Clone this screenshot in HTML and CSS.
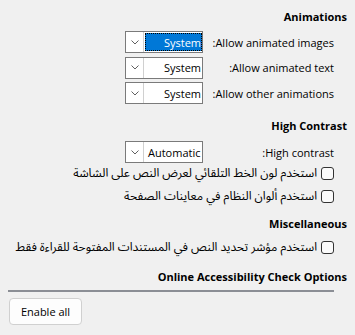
FILE: index.html
```html
<!DOCTYPE html>
<html lang="ar" dir="rtl">
<head>
<meta charset="utf-8">
<link rel="stylesheet" href="styles.css">
</head>
<body>
<div class="page">
  <section class="section sec-anim">
    <h2 class="title">Animations</h2>
    <div class="content">
      <div class="row">
        <span class="label">Allow animated images:</span>
        <div class="combo focused">
          <span class="value"><span class="sel">System</span></span>
          <span class="drop"><svg width="8" height="5" viewBox="0 0 8 5"><path d="M0.5 0.5 L4 4 L7.5 0.5" fill="none" stroke="#606060" stroke-width="1"/></svg></span>
        </div>
      </div>
      <div class="row">
        <span class="label">Allow animated text:</span>
        <div class="combo">
          <span class="value">System</span>
          <span class="drop"><svg width="8" height="5" viewBox="0 0 8 5"><path d="M0.5 0.5 L4 4 L7.5 0.5" fill="none" stroke="#606060" stroke-width="1"/></svg></span>
        </div>
      </div>
      <div class="row">
        <span class="label">Allow other animations:</span>
        <div class="combo">
          <span class="value">System</span>
          <span class="drop"><svg width="8" height="5" viewBox="0 0 8 5"><path d="M0.5 0.5 L4 4 L7.5 0.5" fill="none" stroke="#606060" stroke-width="1"/></svg></span>
        </div>
      </div>
    </div>
  </section>

  <section class="section sec-hc">
    <h2 class="title">High Contrast</h2>
    <div class="content">
      <div class="row">
        <span class="label">High contrast:</span>
        <div class="combo combo-left">
          <span class="value">Automatic</span>
          <span class="drop"><svg width="8" height="5" viewBox="0 0 8 5"><path d="M0.5 0.5 L4 4 L7.5 0.5" fill="none" stroke="#606060" stroke-width="1"/></svg></span>
        </div>
      </div>
      <label class="check first"><span class="box"></span><span class="ctext">استخدم لون الخط التلقائي لعرض النص على الشاشة</span></label>
      <label class="check"><span class="box"></span><span class="ctext">استخدم ألوان النظام في معاينات الصفحة</span></label>
    </div>
  </section>

  <section class="section sec-misc">
    <h2 class="title">Miscellaneous</h2>
    <div class="content">
      <label class="check first"><span class="box"></span><span class="ctext">استخدم مؤشر تحديد النص في المستندات المفتوحة للقراءة فقط</span></label>
    </div>
  </section>

  <section class="section sec-online">
    <h2 class="title">Online Accessibility Check Options</h2>
    <div class="content">
      <div class="sep"></div>
    </div>
    <div class="actions">
      <button class="btn" type="button">Enable all</button>
    </div>
  </section>
</div>
</body>
</html>
```

FILE: styles.css
```css
html, body {
  margin: 0;
  padding: 0;
}
body {
  background: #f0f0f0;
  color: #000;
  font-family: "Open Sans", "Noto Sans Arabic", "DejaVu Sans", sans-serif;
  font-size: 11px;
  direction: rtl;
  width: 355px;
  height: 335px;
  overflow: hidden;
}
.page {
  padding: 9px 8px 0 8px;
}
.title {
  margin: 0;
  font-size: 11px;
  font-weight: 700;
  line-height: 16px;
  height: 16px;
  text-align: right;
}
.content {
  margin-right: 13px;
}
.sec-anim .content { margin-top: 6px; }
.sec-hc { margin-top: 14px; }
.sec-hc .content { margin-top: 7px; }
.sec-misc { margin-top: 11px; }
.sec-misc .content { margin-top: 6px; }
.sec-online { margin-top: 13px; }
.sec-online .content { margin-top: 5px; }

.row {
  display: flex;
  align-items: center;
  gap: 6px;
  height: 22px;
}
.row + .row { margin-top: 3.5px; }
.label {
  width: 125px;
  flex: none;
  white-space: nowrap;
}
.combo {
  flex: none;
  width: 78px;
  height: 22px;
  box-sizing: border-box;
  border: 1px solid #7a7a7a;
  background: #fff;
  display: flex;
  direction: rtl;
}
.value {
  flex: 1;
  display: flex;
  align-items: center;
  justify-content: flex-end;
  direction: ltr;
  padding: 1px 1px;
  white-space: nowrap;
}
.combo-left .value {
  justify-content: flex-start;
  padding-left: 4px;
}
.sel {
  display: flex;
  align-items: center;
  justify-content: flex-end;
  width: 100%;
  height: 100%;
  box-sizing: border-box;
  background: #0078d7;
  color: #fff;
  outline: 1px dotted #000;
  outline-offset: -1px;
  padding-right: 1px;
}
.focused .value { padding: 1px 0 1px 1px; }
.drop {
  width: 17px;
  flex: none;
  border-right: 1px solid #d0d0d0;
  display: flex;
  align-items: center;
  justify-content: center;
}

.check {
  display: flex;
  align-items: center;
  gap: 4px;
  height: 18px;
  white-space: nowrap;
}
.ctext {
  font-size: 12px;
}
.sec-hc .check.first { margin-top: 1px; }
.check + .check { margin-top: 5px; }
.box {
  width: 13px;
  height: 13px;
  box-sizing: border-box;
  border: 1px solid #333;
  border-radius: 3px;
  background: #fbfbfb;
  flex: none;
}
.sep {
  height: 2px;
  background: #8b8e95;
}
.actions {
  display: flex;
  justify-content: flex-end;
  margin-top: 6px;
  padding-left: 1px;
}
.btn {
  width: 73px;
  height: 27px;
  box-sizing: border-box;
  border: 1px solid #d0d0d0;
  border-radius: 4px;
  background: #fdfdfd;
  font-family: "Open Sans", sans-serif;
  font-size: 11px;
  color: #000;
  padding: 0;
}
```
